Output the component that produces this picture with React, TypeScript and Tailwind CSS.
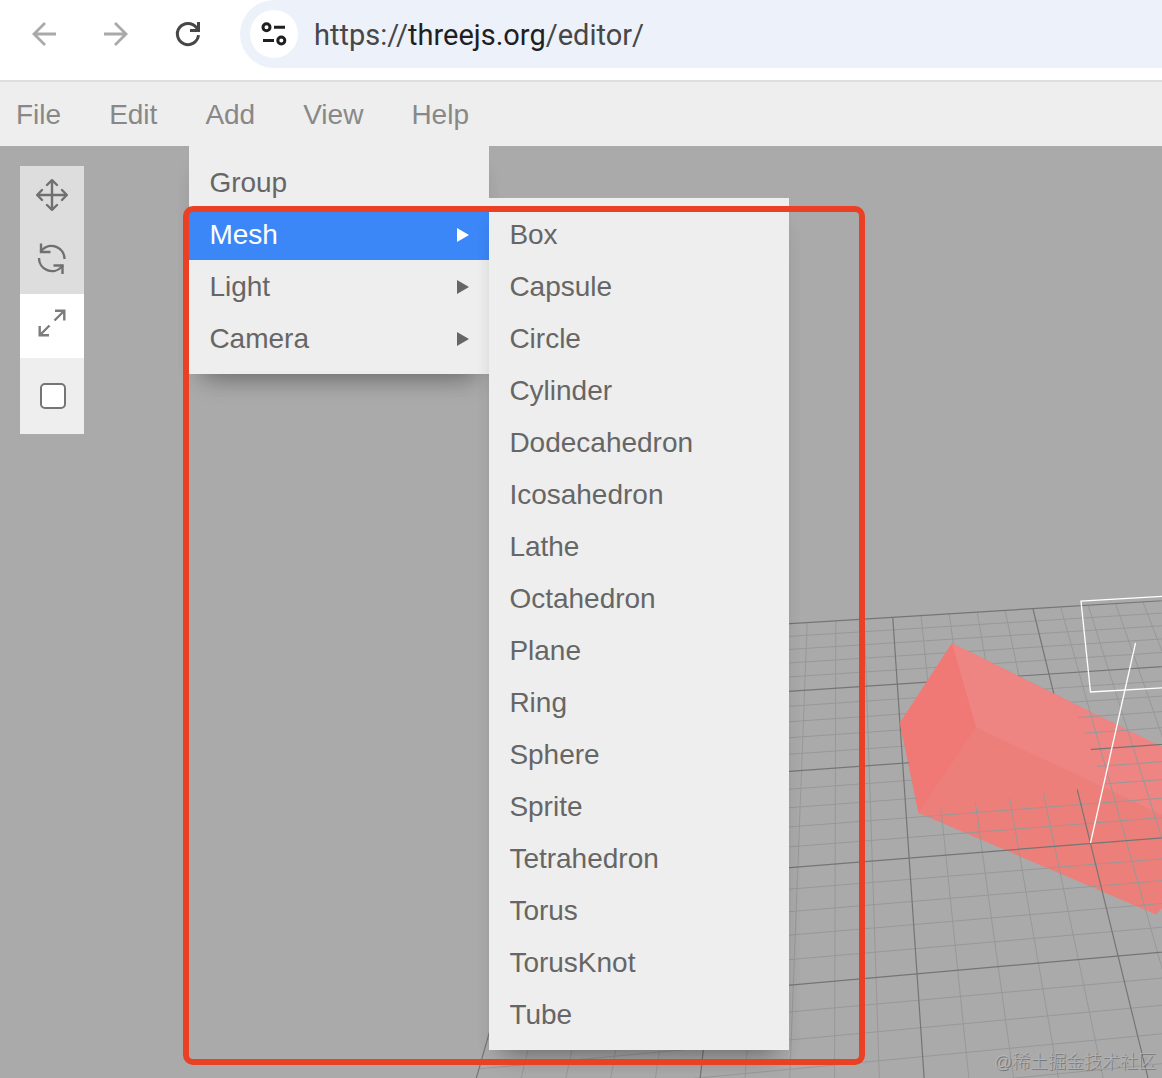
import { useState } from 'react'

type MenuOption = { label: string; children?: string[] }

const titles = ['File', 'Edit', 'Add', 'View', 'Help']

const addOptions: MenuOption[] = [
  { label: 'Group' },
  {
    label: 'Mesh',
    children: [
      'Box',
      'Capsule',
      'Circle',
      'Cylinder',
      'Dodecahedron',
      'Icosahedron',
      'Lathe',
      'Octahedron',
      'Plane',
      'Ring',
      'Sphere',
      'Sprite',
      'Tetrahedron',
      'Torus',
      'TorusKnot',
      'Tube',
    ],
  },
  { label: 'Light', children: [] },
  { label: 'Camera', children: [] },
]

const panelCls =
  'absolute w-[300px] bg-[#eee] py-[10px] shadow-[0_20px_24px_-16px_rgba(0,0,0,0.3),0_12px_20px_-8px_rgba(0,0,0,0.12)]'
const rowCls = 'flex h-[52px] w-full items-center justify-between px-5 pt-0.5 text-left'

/** Perspective projection of a point on the ground plane to viewport pixels. */
function project(x: number, z: number) {
  const w = 1 + 0.00278 * x - 0.0197 * z
  return [(1090.5 + 38.8 * x - 16.51 * z) / w, (843.5 - 0.517 * x + 3.664 * z) / w - 146]
}

function gridPath(major: boolean) {
  let d = ''
  for (let i = -15; i <= 15; i++) {
    if ((i % 5 === 0) !== major) continue
    const [ax, ay] = project(i, -15)
    const [bx, by] = project(i, 15)
    const [cx, cy] = project(-15, i)
    const [ex, ey] = project(15, i)
    d += `M${ax} ${ay}L${bx} ${by}M${cx} ${cy}L${ex} ${ey}`
  }
  return d
}

function Box() {
  return (
    <g>
      <path d="M952 497.500 900 577 918.500 667 1156 768.500 1176 748 1176 608Z" fill="#ed7f7a" />
      <path d="M952 497.500 976 581.500 1176 675 1176 608Z" fill="#ee8582" />
      <path d="M952 497.500 900 577 918.500 667 976 581.500Z" fill="#f07975" />
    </g>
  )
}

/** Grid, box and directional light helper. */
function Scene() {
  return (
    <svg
      viewBox="0 0 1162 932"
      preserveAspectRatio="xMinYMin slice"
      className="absolute inset-0 size-full"
      fill="none"
      aria-hidden="true"
    >
      <clipPath id="above-ground">
        <path d="M952 490 890 577 900 580 921 663.500 1105 640 1070 550Z" />
      </clipPath>
      <Box />
      <path d={gridPath(false)} stroke="#989898" />
      <path d={gridPath(true)} stroke="#757575" strokeWidth="1.200" />
      <g clipPath="url(#above-ground)">
        <Box />
      </g>
      <path d="M1170 450 1081 455 1090.500 546 1170 541.500M1135.500 497 1090.500 697" stroke="#fff" strokeWidth="1.300" />
    </svg>
  )
}

function BrowserBar() {
  const [editing, setEditing] = useState(false)
  const [url, setUrl] = useState('https://threejs.org/editor/')

  return (
    <header className="flex h-[82px] shrink-0 items-start border-b-2 border-[#dedede] bg-white pl-[26px]">
      <nav className="flex h-[68px] items-center gap-9">
        <button type="button" aria-label="Back" className="text-[#a9a9a9]">
          <svg width="36" height="36" fill="none" stroke="currentColor" strokeWidth="2.800">
            <path d="M30 18H8M19 7 8 18 19 29" />
          </svg>
        </button>
        <button type="button" aria-label="Forward" className="text-[#a9a9a9]">
          <svg width="36" height="36" fill="none" stroke="currentColor" strokeWidth="2.800">
            <path d="M6 18H28M17 7 28 18 17 29" />
          </svg>
        </button>
        <button type="button" aria-label="Reload" className="text-[#474747]">
          <svg width="36" height="36" fill="none" stroke="currentColor" strokeWidth="3">
            <path d="M28.500 19.200A10.600 10.600 0 1 1 26.500 11.700L28.500 14.500M28.500 6V14.500H20" />
          </svg>
        </button>
      </nav>
      <div className="relative ml-[34px] flex h-[68px] flex-1 items-center gap-4 rounded-l-full bg-[#ecf1fa] pl-[10px]">
        <button
          type="button"
          aria-label="View site information"
          className="z-10 flex size-12 items-center justify-center rounded-full bg-white text-[#1f1f1f]"
        >
          <svg width="28" height="28" fill="none" stroke="currentColor" strokeWidth="3">
            <circle cx="6.500" cy="7.300" r="3.500" />
            <circle cx="21.300" cy="20.500" r="3.500" />
            <path d="M14 7.200H25M3 20.500H14" />
          </svg>
        </button>
        {!editing && (
          <span className="pt-0.5 font-['Roboto',sans-serif] text-[29px] leading-9 text-[#474747]">
            https://<span className="text-[#1f1f1f]">threejs.org</span>/editor/
          </span>
        )}
        <input
          type="text"
          aria-label="Address"
          value={editing ? url : ''}
          onChange={(e) => setUrl(e.target.value)}
          onFocus={() => setEditing(true)}
          onBlur={() => setEditing(false)}
          className="absolute inset-0 bg-transparent pl-[74px] font-['Roboto',sans-serif] text-[29px] text-[#1f1f1f] outline-none"
        />
      </div>
    </header>
  )
}

function AddMenu() {
  const [open, setOpen] = useState('Mesh')

  return (
    <ul className={`${panelCls} top-full left-0 z-10 text-[#666]`}>
      {addOptions.map((o) => (
        <li key={o.label} className="relative" onMouseEnter={() => setOpen(o.label)}>
          <button type="button" className={`${rowCls} ${open === o.label ? 'bg-[#3b87f7] text-white' : ''}`}>
            {o.label}
            {o.children && (
              <svg width="12" height="14" className="fill-current" aria-hidden="true">
                <path d="M0 0 12 7 0 14Z" />
              </svg>
            )}
          </button>
          {open === o.label && !!o.children?.length && (
            <ul className={`${panelCls} -top-[10px] left-full text-[#666]`}>
              {o.children.map((c) => (
                <li key={c}>
                  <button type="button" className={`${rowCls} hover:bg-[#3b87f7] hover:text-white`}>
                    {c}
                  </button>
                </li>
              ))}
            </ul>
          )}
        </li>
      ))}
    </ul>
  )
}

function Toolbar() {
  const toolCls = 'flex h-16 w-full justify-center pt-[13px]'
  return (
    <div className="relative m-5 w-16 self-start bg-[#eee] text-[#707070]">
      <button type="button" aria-label="Translate" className={`${toolCls} bg-[#ddd]`}>
        <svg width="32" height="32" fill="none" stroke="currentColor" strokeWidth="2.400" strokeLinecap="round" strokeLinejoin="round">
          <path d="M16 1.200V30.800M1.200 16H30.800M11 6 16 1.200 21 6M11 26 16 30.800 21 26M6 11 1.200 16 6 21M26 11 30.800 16 26 21" />
        </svg>
      </button>
      <button type="button" aria-label="Rotate" className={`${toolCls} bg-[#ddd]`}>
        <svg width="32" height="32" fill="none" stroke="currentColor" strokeWidth="2.400">
          <path d="M28.500 16A13 13 0 0 0 6 7L4.500 8.800M3 15A13 13 0 0 0 25.500 24L27 22.200" />
          <path d="M5 0.500V9H14.500M26.500 31V22.500H17.500" />
        </svg>
      </button>
      <button type="button" aria-label="Scale" className={`${toolCls} bg-white text-[#7c7c7c]`}>
        <svg width="32" height="32" fill="none" stroke="currentColor" strokeWidth="2.400">
          <path d="M18.500 13.500 28.500 3.500M19 3.800H28.300V13.500M13.500 18.500 3.500 28.500M3.700 19V28.200H13" />
        </svg>
      </button>
      <div className="flex h-[76px] items-center justify-center pl-[2px]">
        <input
          type="checkbox"
          aria-label="Local"
          className="size-[26px] appearance-none rounded-[5px] border-2 border-[#757575] bg-white checked:bg-[#3b87f7]"
        />
      </div>
    </div>
  )
}

export default function App() {
  return (
    <div className="flex min-h-screen flex-col overflow-hidden font-['Liberation_Sans',Arial,sans-serif] text-[28px]">
      <BrowserBar />
      <nav className="relative z-10 flex h-16 shrink-0 gap-4 bg-[#eee] text-[#888]">
        {titles.map((t) => (
          <div key={t} className="relative">
            <button type="button" className="h-16 px-4 pt-0.5">
              {t}
            </button>
            {t === 'Add' && <AddMenu />}
          </div>
        ))}
      </nav>
      <main className="relative flex flex-1 bg-[#aaa]">
        <Scene />
        <Toolbar />
        <div className="pointer-events-none absolute top-[60px] left-[183px] z-20 h-[859px] w-[682px] rounded-[10px] border-6 border-[#ea4125]" />
        <p className="absolute right-[6px] bottom-1 font-['Liberation_Sans','Noto_Sans_CJK_SC',sans-serif] text-[18px] leading-6 font-light text-[#b4b4b4] [text-shadow:1px_1px_0_#777]">
          @稀土掘金技术社区
        </p>
      </main>
    </div>
  )
}
